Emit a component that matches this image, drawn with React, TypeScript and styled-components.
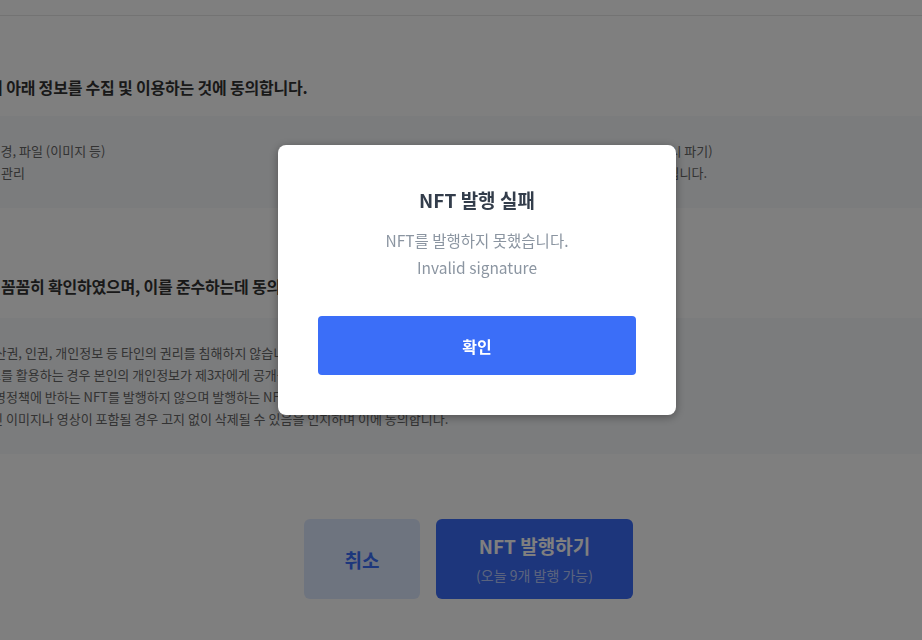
import styled, { createGlobalStyle } from 'styled-components';

const GlobalStyle = createGlobalStyle`
  html, body {
    margin: 0;
    padding: 0;
    background: #ffffff;
    overflow: hidden;
  }
  body {
    font-family: 'Noto Sans CJK KR', 'Noto Sans', sans-serif;
    -webkit-font-smoothing: antialiased;
  }
  * {
    box-sizing: border-box;
  }
`;

const collectRows = [
  {
    left: '수집 항목: 프로필 배경, 파일 (이미지 등)',
    right: '보유 기간: 서비스 이용 기간 (탈퇴 시 파기)',
  },
  {
    left: '이용목적: NFT 발행 관리',
    right: '동의를 거부하실 경우 발행이 제한됩니다.',
  },
];

const noticeRows = [
  '발행하는 NFT는 재산권, 인권, 개인정보 등 타인의 권리를 침해하지 않습니다.',
  'NFT 발행, 지갑 주소를 활용하는 경우 본인의 개인정보가 제3자에게 공개될 수 있습니다.',
  '해당 서비스들의 운영정책에 반하는 NFT를 발행하지 않으며 발행하는 NFT에 책임을 집니다.',
  '음란하거나 선정적인 이미지나 영상이 포함될 경우 고지 없이 삭제될 수 있음을 인지하며 이에 동의합니다.',
];

export default function App() {
  return (
    <>
      <GlobalStyle />
      <Page>
        <Header />
        <Main>
          <Content>
            <SectionTitle $bottom={18}>NFT 발행 위해서 아래 정보를 수집 및 이용하는 것에 동의합니다.</SectionTitle>
            <InfoBox>
              <TwoColumns>
                <Column>
                  {collectRows.map((row) => (
                    <BodyLine key={row.left}>{row.left}</BodyLine>
                  ))}
                </Column>
                <Column>
                  {collectRows.map((row) => (
                    <BodyLine key={row.right}>{row.right}</BodyLine>
                  ))}
                </Column>
              </TwoColumns>
            </InfoBox>

            <SectionTitle $top={67} $bottom={21}>
              발행 유의사항을 꼼꼼히 확인하였으며, 이를 준수하는데 동의합니다.
            </SectionTitle>
            <InfoBox>
              {noticeRows.map((row) => (
                <BodyLine key={row}>{row}</BodyLine>
              ))}
            </InfoBox>

            <ActionRow>
              <CancelButton>취소</CancelButton>
              <MintButton>
                <MintLabel>NFT 발행하기</MintLabel>
                <MintSub>(오늘 9개 발행 가능)</MintSub>
              </MintButton>
            </ActionRow>
          </Content>
        </Main>
      </Page>

      <Overlay>
        <Dialog role="alertdialog" aria-modal="true">
          <DialogTitle>NFT 발행 실패</DialogTitle>
          <DialogMessage>
            NFT를 발행하지 못했습니다.
            <br />
            Invalid signature
          </DialogMessage>
          <ConfirmButton>확인</ConfirmButton>
        </Dialog>
      </Overlay>
    </>
  );
}

const Page = styled.div`
  width: 100%;
  min-height: 640px;
  background: #ffffff;
  display: flex;
  flex-direction: column;
`;

const Header = styled.header`
  height: 16px;
  border-bottom: 1px solid #e6e6e6;
`;

const Main = styled.main`
  display: flex;
  justify-content: center;
  padding-left: 15px;
`;

const Content = styled.div`
  flex: 0 0 1200px;
  width: 1200px;
  padding-top: 60px;
`;

const SectionTitle = styled.h3<{ $top?: number; $bottom?: number }>`
  margin: ${({ $top }) => $top ?? 0}px 0 ${({ $bottom }) => $bottom ?? 18}px;
  padding: 0 24px;
  font-size: 16px;
  font-weight: 700;
  line-height: 22px;
  letter-spacing: -0.2px;
  color: #333333;
  white-space: nowrap;
`;

const InfoBox = styled.div`
  background: #f7f8fa;
  padding: 24px;
`;

const TwoColumns = styled.div`
  display: grid;
  grid-template-columns: 1fr 1fr;
  column-gap: 40px;
`;

const Column = styled.div`
  display: flex;
  flex-direction: column;
`;

const BodyLine = styled.p`
  margin: 0;
  font-size: 13px;
  line-height: 22px;
  color: #666666;
  white-space: nowrap;
`;

const ActionRow = styled.div`
  display: flex;
  justify-content: center;
  gap: 16px;
  margin-top: 65px;
`;

const CancelButton = styled.button`
  width: 116px;
  height: 80px;
  border: none;
  border-radius: 6px;
  background: #dde8ff;
  color: #3b6ef8;
  font-family: inherit;
  font-size: 19px;
  font-weight: 700;
`;

const MintButton = styled.button`
  width: 197px;
  height: 80px;
  border: none;
  border-radius: 6px;
  background: #3b6cf8;
  color: #ffffff;
  font-family: inherit;
  display: flex;
  flex-direction: column;
  align-items: center;
  justify-content: center;
  gap: 8px;
`;

const MintLabel = styled.span`
  font-size: 19px;
  font-weight: 700;
  line-height: 24px;
`;

const MintSub = styled.span`
  font-size: 14px;
  line-height: 18px;
  color: rgba(255, 255, 255, 0.65);
`;

const Overlay = styled.div`
  position: fixed;
  inset: 0;
  background: rgba(0, 0, 0, 0.5);
  display: flex;
  justify-content: center;
  align-items: flex-start;
  padding: 145px 0 0 32px;
`;

const Dialog = styled.div`
  width: 398px;
  height: 270px;
  background: #ffffff;
  border-radius: 8px;
  box-shadow: 0 2px 10px rgba(0, 0, 0, 0.35);
  padding: 42px 40px 40px;
  display: flex;
  flex-direction: column;
  align-items: stretch;
  text-align: center;
`;

const DialogTitle = styled.h2`
  margin: 0;
  font-size: 19px;
  font-weight: 700;
  line-height: 26px;
  color: #333d4b;
`;

const DialogMessage = styled.p`
  margin: 14px 0 0;
  font-size: 15.5px;
  line-height: 27px;
  color: #8b95a1;
`;

const ConfirmButton = styled.button`
  margin-top: 35px;
  height: 60px;
  border: none;
  border-radius: 4px;
  background: #3b6ef8;
  color: #ffffff;
  font-family: inherit;
  font-size: 16px;
  font-weight: 700;
`;
